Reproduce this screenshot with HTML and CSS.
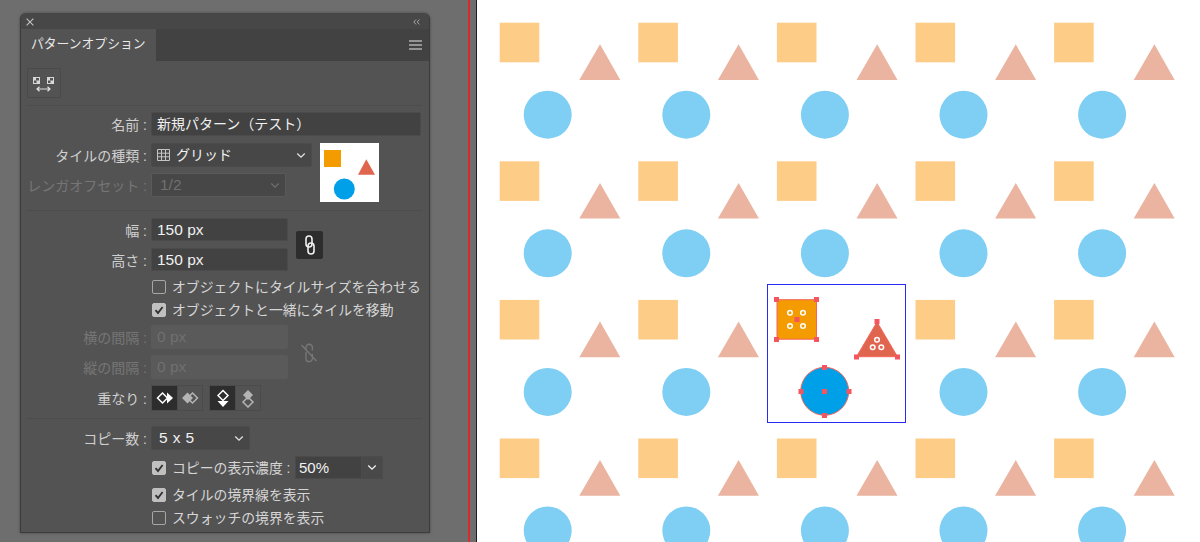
FILE: index.html
```html
<!DOCTYPE html>
<html lang="ja">
<head>
  <meta charset="UTF-8">
  <title>パターンオプション</title>
  <link rel="stylesheet" href="styles.css">
</head>
<body>
  <svg class="defs" width="0" height="0">
    <symbol id="chev" viewBox="0 0 12 8"><path d="M1.5 1.5 6 6l4.5-4.5" fill="none" stroke="currentColor" stroke-width="1.6"/></symbol>
    <symbol id="tick" viewBox="0 0 14 14"><path d="M3.5 7.2 6 10l4.6-6" fill="none" stroke="#333" stroke-width="1.9"/></symbol>
    <g id="tile-pale">
      <rect x="9.4" y="15.4" width="39.6" height="39.6" fill="#fdcc87"/>
      <path d="M109.7 37 130 72.7H89z" fill="#eab4a0"/>
      <circle cx="57.4" cy="107.4" r="24" fill="#7fcef4"/>
    </g>
  </svg>

  <div class="dock">
    <div class="panel">
      <div class="titlebar">
        <svg class="close" width="8" height="8" viewBox="0 0 9 9"><path d="M.7.7l7.6 7.6M8.3.7 .7 8.3" stroke="#c4c4c4" stroke-width="1.2"/></svg>
        <svg class="collapse" width="7" height="6" viewBox="0 0 7 6"><path d="M3 .6.8 3 3 5.4M6.4.6 4.2 3l2.2 2.4" fill="none" stroke="#a8a8a8"/></svg>
      </div>
      <div class="tabs">
        <div class="tab">パターンオプション</div>
        <svg class="menu" width="13" height="10" viewBox="0 0 13 10"><path d="M0 1h13M0 5h13M0 9h13" stroke="#b0b0b0" stroke-width="1.3"/></svg>
      </div>

      <div class="body">
        <div class="tool-btn">
          <svg width="24" height="16" viewBox="0 0 24 16">
            <rect x="1" y="0" width="7" height="7" fill="#d8d8d8"/>
            <rect x="4" y="1" width="3" height="2.500" fill="#555"/>
            <rect x="2" y="3.500" width="2.500" height="2.500" fill="#555"/>
            <rect x="15" y="0" width="7" height="7" fill="#d8d8d8"/>
            <rect x="18" y="1" width="3" height="2.500" fill="#555"/>
            <rect x="16" y="3.500" width="2.500" height="2.500" fill="#555"/>
            <path d="M5 12h13M7.500 9.700 5 12l2.500 2.300M15.500 9.700l2.500 2.300-2.500 2.300" fill="none" stroke="#e0e0e0" stroke-width="1.200"/>
          </svg>
        </div>
        <div class="divider"></div>

        <div class="row name-row">
          <span class="label">名前 :</span>
          <div class="field field-name">新規パターン（テスト）</div>
        </div>

        <div class="tile-block">
          <div class="col">
            <div class="row">
              <span class="label">タイルの種類 :</span>
              <div class="field select select-tile">
                <svg class="grid-icon" width="13" height="12" viewBox="0 0 13 12"><path d="M.5.5h12v11H.5zM.5 4.2h12M.5 7.8h12M4.5.5v11M8.5.5v11" fill="none" stroke="#c4c4c4"/></svg>
                <span>グリッド</span>
                <svg class="chev" width="10" height="7"><use href="#chev"/></svg>
              </div>
            </div>
            <div class="row row-brick">
              <span class="label off">レンガオフセット :</span>
              <div class="field select select-brick disabled num">
                <span>1/2</span>
                <svg class="chev" width="10" height="7"><use href="#chev"/></svg>
              </div>
            </div>
          </div>
          <svg class="preview" width="59" height="59" viewBox="0 0 59 59">
            <rect width="59" height="59" fill="#fff"/>
            <rect x="4" y="7" width="17" height="17" fill="#f49b00"/>
            <path d="M46.300 16.300 55 31.700H38z" fill="#e0654f"/>
            <circle cx="24.300" cy="46" r="10.500" fill="#00a0e9"/>
          </svg>
        </div>
        <div class="divider divider-size"></div>

        <div class="pair-block pair-size">
          <div class="col col-pair">
            <div class="row">
              <span class="label">幅 :</span>
              <div class="field field-num num">150 px</div>
            </div>
            <div class="row">
              <span class="label">高さ :</span>
              <div class="field field-num num">150 px</div>
            </div>
          </div>
          <div class="link-btn">
            <svg width="12" height="20" viewBox="0 0 12 20"><rect x="2" y="1" width="6" height="11" rx="3" fill="none" stroke="#f0f0f0" stroke-width="1.600"/><rect x="4" y="8" width="6" height="11" rx="3" fill="none" stroke="#f0f0f0" stroke-width="1.600"/></svg>
          </div>
        </div>

        <label class="check-row check-first"><span class="box"></span><span class="txt">オブジェクトにタイルサイズを合わせる</span></label>
        <label class="check-row"><span class="box on"><svg width="14" height="14"><use href="#tick"/></svg></span><span class="txt">オブジェクトと一緒にタイルを移動</span></label>

        <div class="pair-block pair-gap">
          <div class="col col-pair col-gap">
            <div class="row">
              <span class="label off">横の間隔 :</span>
              <div class="field field-num disabled num">0 px</div>
            </div>
            <div class="row">
              <span class="label off">縦の間隔 :</span>
              <div class="field field-num disabled num">0 px</div>
            </div>
          </div>
          <svg class="link-off" width="18" height="20" viewBox="0 0 18 20"><path d="M6 6V4.500a3.200 3.200 0 0 1 6.400 0v3M12.400 11v4.500a3.200 3.200 0 0 1-6.400 0V9M1.500 2 16.500 18" fill="none" stroke="#777" stroke-width="1.400"/></svg>
        </div>

        <div class="row row-overlap">
          <span class="label">重なり :</span>
          <div class="btn-group">
            <div class="ov-btn active">
              <svg width="18" height="14" viewBox="0 0 18 14"><path d="M11 1.500 17 7l-6 5.500z" fill="#fff"/><path d="M6.500 2 11.500 7l-5 5-5-5z" fill="#2d2d2d" stroke="#fff" stroke-width="1.500"/></svg>
            </div>
            <div class="ov-btn">
              <svg width="18" height="14" viewBox="0 0 18 14"><path d="M11.500 2 16.500 7l-5 5-5-5z" fill="none" stroke="#b4b4b4" stroke-width="1.500"/><path d="M6.500 1.500 12 7l-5.500 5.500L1 7z" fill="#b4b4b4"/></svg>
            </div>
          </div>
          <div class="btn-group">
            <div class="ov-btn active">
              <svg width="14" height="19" viewBox="0 0 14 19"><path d="M1.500 12 7 18l5.500-6z" fill="#fff"/><path d="M7 1.500 12 6.500l-5 5-5-5z" fill="#2d2d2d" stroke="#fff" stroke-width="1.500"/></svg>
            </div>
            <div class="ov-btn">
              <svg width="14" height="19" viewBox="0 0 14 19"><path d="M7 8 12 13l-5 5-5-5z" fill="none" stroke="#b4b4b4" stroke-width="1.500"/><path d="M7 1 12 6 7 11 2 6z" fill="#b4b4b4"/></svg>
            </div>
          </div>
        </div>
        <div class="divider divider-copy"></div>

        <div class="row row-copy">
          <span class="label">コピー数 :</span>
          <div class="field select select-copy num">
            <span>5 x 5</span>
            <svg class="chev" width="10" height="7"><use href="#chev"/></svg>
          </div>
        </div>

        <div class="check-row row-opacity">
          <span class="box on"><svg width="14" height="14"><use href="#tick"/></svg></span>
          <span class="txt opacity-label">コピーの表示濃度 :</span>
          <div class="combo">
            <div class="combo-value">50%</div>
            <div class="combo-arrow"><svg width="10" height="7"><use href="#chev"/></svg></div>
          </div>
        </div>
        <label class="check-row check-border"><span class="box on"><svg width="14" height="14"><use href="#tick"/></svg></span><span class="txt">タイルの境界線を表示</span></label>
        <label class="check-row"><span class="box"></span><span class="txt">スウォッチの境界を表示</span></label>
      </div>
    </div>
  </div>
  <div class="guide"></div>
  <div class="gutter"></div>

  <svg class="canvas" viewBox="477 0 723 542" width="723" height="542">
    <use href="#tile-pale" x="490.300" y="7.300"/>
    <use href="#tile-pale" x="628.900" y="7.300"/>
    <use href="#tile-pale" x="767.500" y="7.300"/>
    <use href="#tile-pale" x="906.100" y="7.300"/>
    <use href="#tile-pale" x="1044.700" y="7.300"/>
    <use href="#tile-pale" x="490.300" y="145.900"/>
    <use href="#tile-pale" x="628.900" y="145.900"/>
    <use href="#tile-pale" x="767.500" y="145.900"/>
    <use href="#tile-pale" x="906.100" y="145.900"/>
    <use href="#tile-pale" x="1044.700" y="145.900"/>
    <use href="#tile-pale" x="490.300" y="284.500"/>
    <use href="#tile-pale" x="628.900" y="284.500"/>
    <use href="#tile-pale" x="906.100" y="284.500"/>
    <use href="#tile-pale" x="1044.700" y="284.500"/>
    <use href="#tile-pale" x="490.300" y="423.100"/>
    <use href="#tile-pale" x="628.900" y="423.100"/>
    <use href="#tile-pale" x="767.500" y="423.100"/>
    <use href="#tile-pale" x="906.100" y="423.100"/>
    <use href="#tile-pale" x="1044.700" y="423.100"/>

    <!-- tile being edited -->
    <rect x="767.500" y="284.500" width="138" height="138" fill="#fff" stroke="#2a2af5"/>
    <rect x="777" y="299.700" width="39.500" height="39.500" fill="#f49b00" stroke="#f5655a"/>
    <path d="M877 322 897.500 356.700H856.500z" fill="#e0654f" stroke="#f5655a"/>
    <circle cx="824.700" cy="391.300" r="24" fill="#00a0e9" stroke="#f5655a"/>
    <g fill="#f5555f">
      <rect x="774" y="297" width="5" height="5"/>
      <rect x="814" y="297" width="5" height="5"/>
      <rect x="774" y="337" width="5" height="5"/>
      <rect x="814" y="337" width="5" height="5"/>
      <rect x="794.500" y="317" width="5" height="5"/>
      <rect x="874.500" y="319" width="5" height="5"/>
      <rect x="854" y="354.500" width="5" height="5"/>
      <rect x="895" y="354.500" width="5" height="5"/>
      <rect x="822" y="365" width="5" height="5"/>
      <rect x="822" y="413" width="5" height="5"/>
      <rect x="798.500" y="389" width="5" height="5"/>
      <rect x="846.500" y="389" width="5" height="5"/>
      <rect x="822" y="389" width="5" height="5"/>
    </g>
    <g fill="#e8614f" stroke="#fff" stroke-width="1.500">
      <circle cx="790" cy="312.700" r="2.300" fill="#f49b00"/>
      <circle cx="803" cy="312.700" r="2.300" fill="#f49b00"/>
      <circle cx="790" cy="326" r="2.300" fill="#f49b00"/>
      <circle cx="803" cy="326" r="2.300" fill="#f49b00"/>
      <circle cx="877" cy="339.700" r="2.300"/>
      <circle cx="872.700" cy="347.300" r="2.300"/>
      <circle cx="881.300" cy="347.300" r="2.300"/>
    </g>
  </svg>
</body>
</html>
```

FILE: styles.css
```css
* { box-sizing: border-box; }
body { margin: 0; height: 542px; display: flex; overflow: hidden; background: #fff; font-family: "Liberation Sans", "Noto Sans CJK JP", sans-serif; font-size: 14px; color: #cfcfcf; }
.defs { position: absolute; }

.dock { width: 468px; height: 542px; background: #6e6e6e; padding: 13px 0 0 20px; flex: none; }
.guide { width: 2px; background: #d92b2b; flex: none; }
.gutter { width: 7px; background: #6e6e6e; border-right: 1px solid #1e1e1e; flex: none; }
.canvas { display: block; flex: none; }

.panel { width: 410px; height: 520px; background: #535353; border: 1px solid #3c3c3c; border-top: 0; border-radius: 6px 6px 0 0; box-shadow: 0 0 3px rgba(0, 0, 0, .35); }
.titlebar { height: 16px; background: #474747; border-radius: 6px 6px 0 0; display: flex; align-items: center; justify-content: space-between; padding: 2px 9px 0 5px; }
.tabs { height: 32px; background: #424242; display: flex; justify-content: space-between; align-items: center; padding-right: 7px; }
.tab { width: 135px; height: 32px; background: #535353; padding-left: 10px; line-height: 30px; font-size: 12.8px; color: #e8e8e8; white-space: nowrap; }
.menu { display: block; }

.body { padding: 7px 7px 0 6px; }
.tool-btn { width: 34px; height: 30px; border: 1px solid #4a4a4a; border-radius: 2px; display: flex; align-items: center; justify-content: center; padding-top: 3px; }
.divider { height: 1px; background: #4c4c4c; margin-top: 7px; }
.divider-size { margin-top: 8px; }

.row { display: flex; align-items: center; }
.label { width: 120px; margin-right: 4px; text-align: right; white-space: nowrap; flex: none; }
.off { color: #767676; }
.name-row { margin-top: 6px; }

.field { height: 24px; background: #424242; border: 1px solid #4b4b4b; border-radius: 2px; color: #f0f0f0; padding-left: 5px; line-height: 22px; white-space: nowrap; }
.num { font-size: 15.5px; }
.field-name { width: 270px; }
.field-num { width: 137px; height: 23px; line-height: 21px; }
.disabled { background: #5a5a5a; border-color: #5a5a5a; color: #707070; }
.select { display: flex; align-items: center; background: #474747; }
.select .chev { margin-left: auto; margin-right: 5px; color: #e0e0e0; }
.select.disabled .chev { color: #6e6e6e; }
.select-tile { width: 161px; }
.select-brick { width: 135px; padding-left: 8px; }
.select-copy { width: 99px; height: 24px; padding-left: 7px; letter-spacing: .4px; }
.grid-icon { margin-right: 6px; }

.tile-block { display: flex; margin-top: 7px; }
.col { display: flex; flex-direction: column; }
.row-brick { margin-top: 6px; }
.preview { display: block; margin-left: 8px; flex: none; }

.pair-block { display: flex; align-items: center; }
.pair-size { margin-top: 7px; }
.pair-gap { margin-top: 4px; }
.col-pair { gap: 7px; }
.col-gap { gap: 6px; }
.col-gap .field { height: 24px; }
.link-btn { width: 27px; height: 28px; margin-left: 8px; background: #2d2d2d; border-radius: 2px; display: flex; align-items: center; justify-content: center; }
.link-off { margin-left: 12px; margin-top: 2px; }

.check-row { display: flex; align-items: center; height: 23px; padding-left: 125px; white-space: nowrap; color: #d6d6d6; font-size: 13.85px; }
.check-first { margin-top: 4px; }
.txt { margin-bottom: 2px; }
.box { width: 14px; height: 14px; margin-right: 6px; border: 1px solid #a6a6a6; border-radius: 2px; flex: none; }
.box.on { background: #c0c0c0; border-color: #c0c0c0; }
.box svg { display: block; margin: -1px; }

.row-overlap { margin-top: 6px; height: 26px; }
.btn-group { display: flex; height: 26px; border: 1px solid #4b4b4b; margin-right: 6px; }
.ov-btn { width: 25px; display: flex; align-items: center; justify-content: center; }
.ov-btn + .ov-btn { border-left: 1px solid #4b4b4b; }
.ov-btn.active { background: #2d2d2d; }

.row-copy { margin-top: 7px; }
.row-opacity { margin-top: 6px; }
.opacity-label { width: 123px; flex: none; }
.combo { display: flex; height: 23px; border: 1px solid #4b4b4b; color: #f0f0f0; font-size: 15px; }
.combo-value { width: 65px; background: #424242; padding-left: 3px; line-height: 21px; }
.combo-arrow { width: 21px; border-left: 1px solid #4b4b4b; background: #494949; display: flex; align-items: center; justify-content: center; }
.check-border { margin-top: 4px; }
```
